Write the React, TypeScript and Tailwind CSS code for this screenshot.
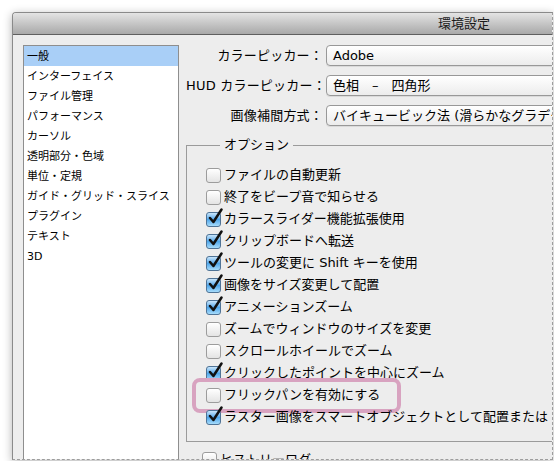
import React from 'react';

const font = '"Lucida Grande", "DejaVu Sans", "Noto Sans CJK JP", sans-serif';

const categories = [
  '一般',
  'インターフェイス',
  'ファイル管理',
  'パフォーマンス',
  'カーソル',
  '透明部分・色域',
  '単位・定規',
  'ガイド・グリッド・スライス',
  'プラグイン',
  'テキスト',
  '3D',
];

const pickers = [
  { label: 'カラーピッカー：', value: 'Adobe' },
  { label: 'HUD カラーピッカー：', value: '色相　–　四角形' },
  { label: '画像補間方式：', value: 'バイキュービック法 (滑らかなグラデーション)' },
];

const options = [
  { text: 'ファイルの自動更新', checked: false },
  { text: '終了をビープ音で知らせる', checked: false },
  { text: 'カラースライダー機能拡張使用', checked: true },
  { text: 'クリップボードへ転送', checked: true },
  { text: 'ツールの変更に Shift キーを使用', checked: true },
  { text: '画像をサイズ変更して配置', checked: true },
  { text: 'アニメーションズーム', checked: true },
  { text: 'ズームでウィンドウのサイズを変更', checked: false },
  { text: 'スクロールホイールでズーム', checked: false },
  { text: 'クリックしたポイントを中心にズーム', checked: true },
  { text: 'フリックパンを有効にする', checked: false, marked: true },
  { text: 'ラスター画像をスマートオブジェクトとして配置または', checked: true },
];

function Checkbox({ checked }: { checked: boolean }) {
  if (!checked) {
    return (
      <span className="relative inline-block h-[15px] w-[15px] shrink-0 rounded-[3px] border border-[#9c9c9c] bg-gradient-to-b from-white to-[#e4e4e4] shadow-[inset_0_1px_0_#fff]" />
    );
  }
  return (
    <span className="relative inline-block h-[15px] w-[15px] shrink-0 rounded-[3px] border border-[#4f7396] bg-gradient-to-b from-[#c9e6fb] via-[#4ea6ea] to-[#a6dcfb]">
      <svg
        className="absolute -top-[5px] left-[1px] h-[17px] w-[15px]"
        viewBox="0 0 15 17"
        fill="none"
      >
        <path d="M2 10 L5.4 14 L13.5 1.5" stroke="#111" strokeWidth={2.5} strokeLinecap="round" strokeLinejoin="round" />
      </svg>
    </span>
  );
}

export default function App() {
  return (
    <div className="h-[461px] w-[554px] overflow-hidden bg-white pl-[12px] pt-[12px]" style={{ fontFamily: font }}>
      <div className="flex h-[448px] w-[541px] flex-col overflow-hidden rounded-tl-[4px] border border-[#8a8a8a] bg-[#ededed] shadow-[0_2px_10px_rgba(0,0,0,0.3)] [border-right-style:dashed] [border-bottom-style:dashed] [border-right-color:#9d9d9d] [border-bottom-color:#9d9d9d]">
        {/* Title bar */}
        <div className="flex h-[22px] shrink-0 items-center justify-end border-b border-[#5f5f5f] bg-gradient-to-b from-[#e4e4e4] to-[#a9a9a9] pr-[62px]">
          <span className="text-[13px] leading-none text-[#1a1a1a]">環境設定</span>
        </div>

        <div className="flex flex-1">
          {/* Category list */}
          <div className="ml-[10px] mt-[10px] h-[420px] w-[156px] shrink-0 border border-[#8e8e8e] bg-white">
            {categories.map((c, i) => (
              <div
                key={c}
                className={`flex h-[20px] items-center pl-[3px] text-[11px] leading-none text-black ${
                  i === 0 ? 'bg-[#a9cff7]' : ''
                }`}
              >
                {c}
              </div>
            ))}
          </div>

          {/* Settings */}
          <div className="flex min-w-0 flex-1 flex-col pl-[7px] pt-[10px]">
            <div className="flex flex-col gap-[9px]">
              {pickers.map((p) => (
                <div key={p.label} className="flex items-center">
                  <span className="w-[137px] shrink-0 whitespace-nowrap text-right text-[13px] tracking-[0.2px] text-black">
                    {p.label}
                  </span>
                  <div className="ml-[3px] flex h-[21px] w-[260px] shrink-0 items-center rounded-l-[4px] border border-[#989898] bg-gradient-to-b from-white to-[#ececec] pl-[6px] shadow-[0_1px_0_rgba(0,0,0,0.08)]">
                    <span className="whitespace-nowrap text-[13px] text-black">{p.value}</span>
                  </div>
                </div>
              ))}
            </div>

            <fieldset className="mt-[11px] w-[400px] shrink-0 border border-[#9b9b9b] pb-[13px] pl-[19px] pt-[11px]">
              <legend className="ml-[14px] px-[4px] text-[13px] leading-[16px] text-black">オプション</legend>
              {options.map((o) => (
                <div key={o.text} className="relative flex h-[22px] items-center gap-[3px]">
                  {o.marked && (
                    <span className="absolute -left-[14px] -top-[6px] h-[35px] w-[209px] rounded-[8px] border-[4px] border-[#d8a3c0]" />
                  )}
                  <Checkbox checked={o.checked} />
                  <span className="whitespace-nowrap text-[13px] text-black">{o.text}</span>
                </div>
              ))}
            </fieldset>

            <div className="ml-[16px] mt-[8px] flex items-center gap-[3px]">
              <Checkbox checked={false} />
              <span className="whitespace-nowrap text-[13px] text-black">ヒストリーログ</span>
            </div>
          </div>
        </div>
      </div>
    </div>
  );
}
